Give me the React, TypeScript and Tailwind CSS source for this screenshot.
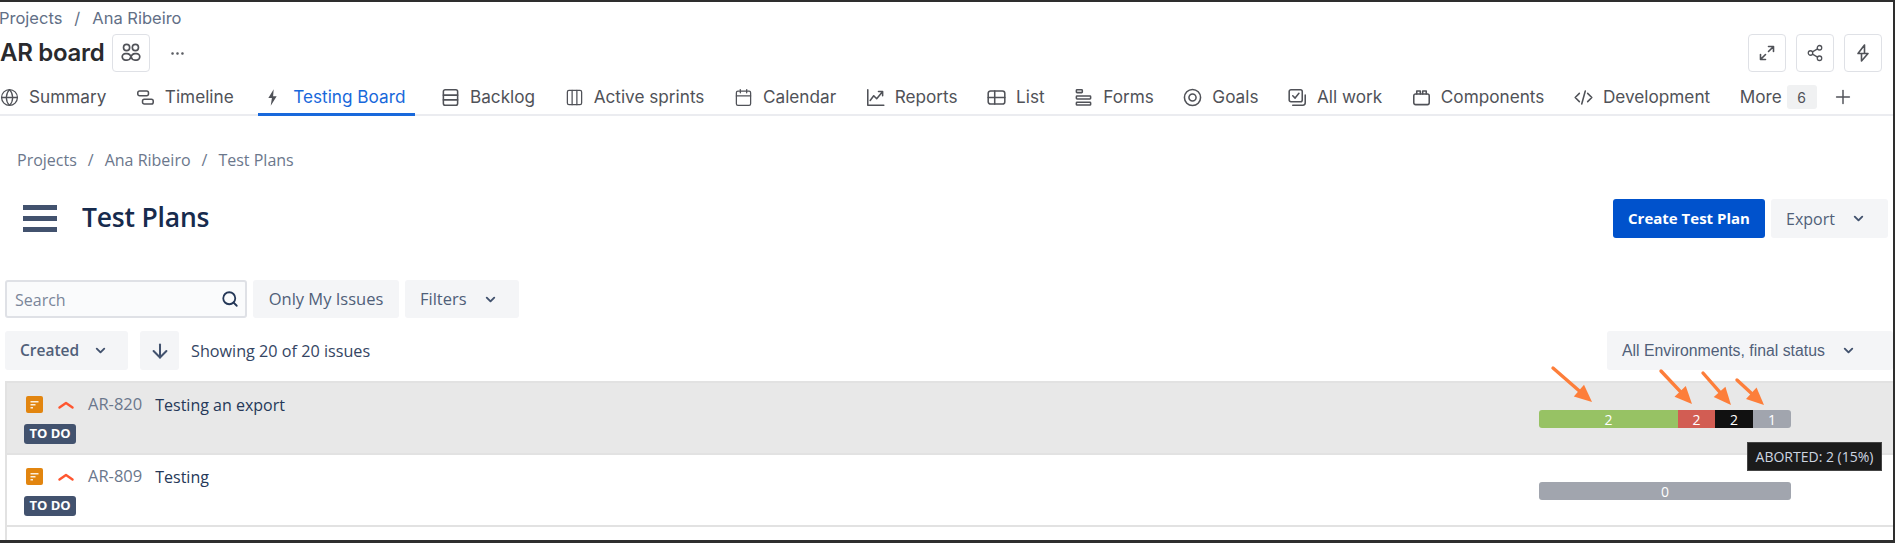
import React from "react";
import { Globe, Calendar, Search, ChevronDown, ArrowDown, Plus, Share2, Ellipsis, Columns3 } from "lucide-react";

const S = ({ children }: { children: React.ReactNode }) => (
  <svg width="19" height="19" viewBox="0 0 16 16" fill="none" stroke="currentColor" strokeWidth="1.3" strokeLinecap="round" strokeLinejoin="round" className="shrink-0">
    {children}
  </svg>
);

const tabs: { label: string; icon: React.ReactNode; active?: boolean }[] = [
  { label: "Summary", icon: <Globe size={19} strokeWidth={1.6} /> },
  { label: "Timeline", icon: <S><rect x="1.5" y="2.5" width="9" height="4" rx="1.5" /><rect x="5.5" y="9.5" width="9" height="4" rx="1.5" /></S> },
  { label: "Testing Board", active: true, icon: <S><path d="M9 1 L4.5 8.5 H7.5 L6.5 15 L11.5 7 H8.5 Z" fill="currentColor" stroke="none" /></S> },
  { label: "Backlog", icon: <S><rect x="2" y="1.5" width="12" height="13" rx="1.5" /><path d="M2 6h12M2 10h12" /></S> },
  { label: "Active sprints", icon: <Columns3 size={19} strokeWidth={1.6} /> },
  { label: "Calendar", icon: <Calendar size={19} strokeWidth={1.6} /> },
  { label: "Reports", icon: <S><path d="M1.5 1.5V14.5H15" /><path d="M3.5 10.5L6.5 6.5L9 9L13.5 3.5M10.5 3H14V6.5" /></S> },
  { label: "List", icon: <S><rect x="1" y="2.5" width="14" height="11" rx="2" /><path d="M1 8h14M6.5 2.5v11" /></S> },
  { label: "Forms", icon: <S><rect x="2" y="1.5" width="5" height="2.4" rx="0.6" /><rect x="2" y="6.8" width="12" height="2.4" rx="0.6" /><rect x="2" y="12" width="12" height="2.4" rx="0.6" /></S> },
  { label: "Goals", icon: <S><circle cx="8" cy="8" r="6.8" /><circle cx="8" cy="8" r="3" /></S> },
  { label: "All work", icon: <S><rect x="1" y="1.5" width="11" height="10" rx="1.5" /><path d="M4 6.500l2 2 3.200-4" /><path d="M4 14.500h8.500a2 2 0 0 0 2-2V6" /></S> },
  { label: "Components", icon: <S><rect x="1.5" y="5" width="13" height="9" rx="1.5" /><path d="M4 5V2.500h3V5M9 5V2.500h3V5" /></S> },
  { label: "Development", icon: <S><path d="M4.500 4.500L1 8l3.500 3.500M11.500 4.500L15 8l-3.500 3.500M9.500 2.500l-3 11" /></S> },
];

const IconBtn = ({ children }: { children: React.ReactNode }) => (
  <button className="w-[38px] h-[38px] flex items-center justify-center border border-[#dfe1e6] rounded-[4px] bg-white text-[#505258]">
    {children}
  </button>
);

const GrayBtn = ({ children, className }: { children: React.ReactNode; className: string }) => (
  <button className={"h-[39px] flex items-center bg-[#f4f5f7] rounded-[3px] text-[#505f79] " + className}>{children}</button>
);

const Chev = () => <ChevronDown size={15} strokeWidth={3} className="text-[#42526e]" />;

const Story = () => (
  <svg width="17" height="17" viewBox="0 0 17 17" className="shrink-0">
    <rect width="17" height="17" rx="2" fill="#e2850f" />
    <path d="M4.500 5h8v1.600h-8zM4.500 8h5v1.600h-5zM4.500 11h2.500v1.600h-2.500z" fill="#fff" opacity="0.85" />
  </svg>
);

const Prio = () => (
  <svg width="16" height="10" viewBox="0 0 16 10" className="shrink-0">
    <path d="M1.500 7.500L8 3l6.500 4.500" fill="none" stroke="#ff5630" strokeWidth="2.4" strokeLinecap="round" strokeLinejoin="round" />
  </svg>
);

const Row = ({ id, title, children, shaded }: { id: string; title: string; children: React.ReactNode; shaded?: boolean }) => (
  <div className={"h-[72px] border-b-2 border-[#e2e2e2] flex justify-between " + (shaded ? "bg-[#e8e8e8]" : "bg-white")}>
    <div className="pl-[19px] pt-[12px]">
      <div className="flex items-center h-[19px]">
        <Story />
        <span className="ml-[15px]"><Prio /></span>
        <span className="ml-[14px] text-[#6b778c] text-[16.500px]">{id}</span>
        <span className="ml-[13px] text-[#253858] text-[16px]">{title}</span>
      </div>
      <div className="mt-[10px] -ml-[2px] w-[52px] h-[20px] rounded-[3px] bg-[#42526e] text-white text-[13px] font-bold flex items-center justify-center">TO DO</div>
    </div>
    <div className="w-[252px] mr-[102px] mt-[27px]">{children}</div>
  </div>
);

const Seg = ({ w, c, n }: { w: string; c: string; n: string }) => (
  <div className={"h-[18px] flex items-center justify-center text-white text-[14px] " + w + " " + c}>{n}</div>
);

const Arrow = ({ x1, y1, x2, y2 }: { x1: number; y1: number; x2: number; y2: number }) => {
  const a = Math.atan2(y2 - y1, x2 - x1);
  const l = 19, sp = 0.42;
  const px = (s: number) => `${x2 - l * Math.cos(a + s)},${y2 - l * Math.sin(a + s)}`;
  return (
    <g>
      <line x1={x1} y1={y1} x2={x2 - 8 * Math.cos(a)} y2={y2 - 8 * Math.sin(a)} stroke="#fd7e3a" strokeWidth="3.4" strokeLinecap="round" />
      <polygon points={`${x2},${y2} ${px(sp)} ${px(-sp)}`} fill="#fd7e3a" />
    </g>
  );
};

export default function App() {
  return (
    <div className="relative w-[1895px] h-[543px] bg-[#2e2e2e] overflow-hidden pt-[2px] pb-[3px] pr-[2px]">
      <div className="w-[1893px] h-[538px] bg-white overflow-hidden">
        <header className="border-b-2 border-[#ebecf0] h-[114px] font-['Inter',sans-serif]">
          <div className="h-[32px] flex items-center text-[16.500px] text-[#626f86] -ml-[1px]">
            Projects<span className="mx-[12px]">/</span>Ana Ribeiro
          </div>
          <div className="h-[38px] flex items-center justify-between pr-[11px]">
            <div className="flex items-center">
              <h1 className="text-[24px] font-semibold text-[#292a2e] -tracking-[0.3px] w-[112px]">AR board</h1>
              <IconBtn>
                <svg width="22" height="22" viewBox="0 0 20 20" fill="none" stroke="currentColor" strokeWidth="1.5">
                  <circle cx="6" cy="5" r="2.8" /><circle cx="14" cy="5" r="2.8" />
                  <path d="M5 10.500H6.500C9 10.500 9.500 12 10 13.500C10.500 15 11 16.500 13.500 16.500H15A3 3 0 0 0 15 10.500H13.500C11 10.500 10.500 12 10 13.500C9.500 15 9 16.500 6.500 16.500H5A3 3 0 0 1 5 10.500Z" />
                </svg>
              </IconBtn>
              <span className="ml-[19px] text-[#505258]"><Ellipsis size={17} strokeWidth={1.6} /></span>
            </div>
            <div className="flex items-center gap-[10px]">
              <IconBtn>
                <svg width="20" height="20" viewBox="0 0 20 20" fill="none" stroke="currentColor" strokeWidth="1.6" strokeLinecap="round" strokeLinejoin="round">
                  <path d="M11.500 8.500L16.500 3.500M11.500 3.500H16.500V8.500M8.500 11.500L3.500 16.500M3.500 11.500V16.500H8.500" />
                </svg>
              </IconBtn>
              <IconBtn><Share2 size={18} strokeWidth={1.7} /></IconBtn>
              <IconBtn>
                <svg width="20" height="20" viewBox="0 0 20 20" fill="none" stroke="currentColor" strokeWidth="1.6" strokeLinecap="round" strokeLinejoin="round">
                  <path d="M11.500 2L5 10.500H15L8.500 18M11.500 2V10.500M8.500 18V10.500" />
                </svg>
              </IconBtn>
            </div>
          </div>
          <nav className="mt-[7px] h-[37px] flex items-stretch gap-[29.5px] text-[17.200px] text-[#505258]">
            {tabs.map((t) =>
              t.active ? (
                <div key={t.label} className="flex items-center gap-[11px] -ml-[5px] pl-[5px] pr-[10px] -mr-[4px] pt-[2px] border-b-[3px] border-[#1868db] text-[#1868db]">
                  <span className="text-[#505258]">{t.icon}</span>
                  <span>{t.label}</span>
                </div>
              ) : (
                <div key={t.label} className="flex items-center gap-[10px] pb-[1px]">
                  {t.icon}
                  <span>{t.label}</span>
                </div>
              )
            )}
            <div className="flex items-center pb-[1px]">
              <span>More</span>
              <span className="ml-[5px] w-[30px] h-[24px] bg-[#f0f1f2] rounded-[3px] text-[14px] flex items-center justify-center">6</span>
              <Plus size={22} strokeWidth={1.6} className="ml-[15px]" />
            </div>
          </nav>
        </header>

        <main className="pl-[5px] font-['Open_Sans',sans-serif]">
          <div className="mt-[32px] ml-[12px] h-[24px] flex items-center text-[16px] text-[#6b778c]">
            Projects<span className="mx-[11px]">/</span>Ana Ribeiro<span className="mx-[11px]">/</span>Test Plans
          </div>
          <div className="mt-[27px] h-[39px] flex items-center justify-between pr-[5px]">
            <div className="flex items-center ml-[18px]">
              <div className="w-[34px] flex flex-col gap-[6px]">
                <div className="h-[5px] bg-[#42526e]" />
                <div className="h-[5px] bg-[#42526e]" />
                <div className="h-[5px] bg-[#42526e]" />
              </div>
              <h2 className="ml-[25px] -mt-[2px] text-[26.500px] font-semibold text-[#172b4d] -tracking-[0.2px]">Test Plans</h2>
            </div>
            <div className="flex items-center gap-[6px]">
              <button className="w-[152px] h-[39px] bg-[#0052cc] text-white rounded-[3px] text-[15px] font-bold">Create Test Plan</button>
              <GrayBtn className="w-[117px] pl-[15px] gap-[16px] text-[16px]">Export <Chev /></GrayBtn>
            </div>
          </div>

          <div className="mt-[42px] flex items-center">
            <div className="w-[242px] h-[38px] flex items-center justify-between bg-[#fafbfc] border-2 border-[#dfe1e6] rounded-[3px] pl-[8px] pr-[6px] text-[16px] text-[#7a869a]">
              <span className="mt-[2px]">Search</span>
              <Search size={18} strokeWidth={2.4} className="text-[#253858]" />
            </div>
            <GrayBtn className="ml-[6px] w-[146px] justify-center !h-[38px] text-[16.500px]">Only My Issues</GrayBtn>
            <GrayBtn className="ml-[6px] w-[114px] pl-[15px] gap-[16px] !h-[38px] text-[16.500px]">Filters <Chev /></GrayBtn>
          </div>

          <div className="mt-[13px] flex items-center">
            <GrayBtn className="w-[123px] pl-[15px] gap-[14px] font-semibold text-[15.500px]">Created <Chev /></GrayBtn>
            <GrayBtn className="ml-[12px] w-[39px] justify-center"><ArrowDown size={22} strokeWidth={2.2} className="text-[#42526e]" /></GrayBtn>
            <span className="ml-[12px] mt-[1px] text-[16.200px] text-[#344563]">Showing 20 of 20 issues</span>
            <GrayBtn className="ml-auto w-[286px] pl-[15px] gap-[16px] text-[15.800px] font-['Liberation_Sans',sans-serif]">All Environments, final status <Chev /></GrayBtn>
          </div>

          <div className="mt-[11px] border-l-2 border-[#e2e2e2] h-[160px]">
            <div className="border-t-2 border-[#e2e2e2]" />
            <Row id="AR-820" title="Testing an export" shaded>
              <div className="flex rounded-[3px] overflow-hidden">
                <Seg w="w-[139px]" c="bg-[#97c264]" n="2" />
                <Seg w="w-[37px]" c="bg-[#d25d53]" n="2" />
                <Seg w="w-[38px]" c="bg-[#111111]" n="2" />
                <Seg w="w-[38px]" c="bg-[#a1a5ae]" n="1" />
              </div>
            </Row>
            <Row id="AR-809" title="Testing">
              <div className="rounded-[3px] overflow-hidden flex">
                <Seg w="w-[252px]" c="bg-[#a1a5ae]" n="0" />
              </div>
            </Row>
          </div>
        </main>
      </div>

      <div className="absolute left-[1747px] top-[442px] w-[135px] h-[29px] bg-[#1b1b1b] border border-[#444] text-[#cdd5e0] text-[14px] font-['Open_Sans',sans-serif] flex items-center justify-center whitespace-nowrap">
        ABORTED: 2 (15%)
      </div>

      <svg className="absolute left-0 top-0 pointer-events-none" width="1895" height="543">
        <Arrow x1={1553} y1={368} x2={1592} y2={402} />
        <Arrow x1={1661} y1={371} x2={1692} y2={404} />
        <Arrow x1={1703} y1={373} x2={1731} y2={405} />
        <Arrow x1={1737} y1={380} x2={1764} y2={405} />
      </svg>
    </div>
  );
}
